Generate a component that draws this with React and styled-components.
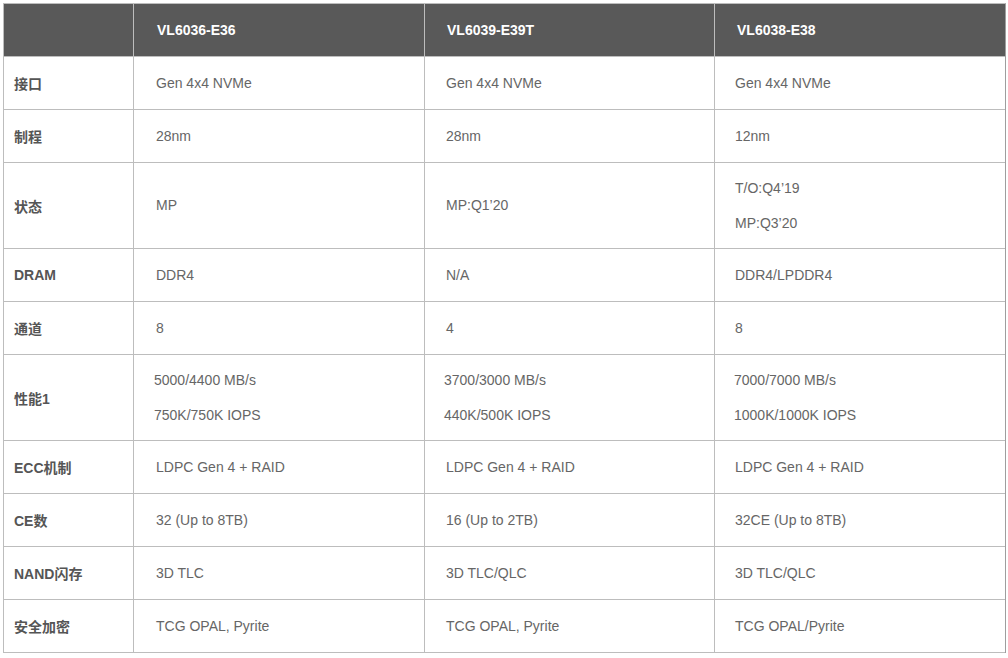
import React from "react";
import styled, { createGlobalStyle } from "styled-components";

const Global = createGlobalStyle`
  html, body { margin: 0; padding: 0; background: #fff; }
  body { font-family: "Liberation Sans", Arial, "Noto Sans CJK SC", sans-serif; }
`;

const Page = styled.div`
  padding: 3px 0 0 3px;
`;

const Grid = styled.div`
  display: grid;
  grid-template-columns: 130px 291px 290px 290px;
  border-top: 1px solid #bdbdbd;
  border-left: 1px solid #bdbdbd;
  width: max-content;
  border-right: 1px solid #9e9e9e;
`;

const HeadCell = styled.div`
  height: 52px;
  background: #595959;
  color: #fff;
  font-weight: bold;
  font-size: 14px;
  display: flex;
  align-items: center;
  padding-left: ${(p) => p.$pad}px;
  border-bottom: 1px solid #bdbdbd;
  border-right: ${(p) => (p.$last ? "none" : "1px solid #bdbdbd")};
`;

const LabelCell = styled.div`
  height: ${(p) => (p.$tall ? 85 : 52)}px;
  display: flex;
  align-items: center;
  padding-left: 10px;
  font-size: 14px;
  font-weight: bold;
  color: #555;
  border-bottom: 1px solid #bdbdbd;
  border-right: 1px solid #bdbdbd;
  font-family: "Liberation Sans", Arial, "Noto Sans CJK SC", sans-serif;
`;

const DataCell = styled.div`
  height: ${(p) => (p.$tall ? 85 : 52)}px;
  display: flex;
  flex-direction: column;
  justify-content: center;
  gap: 14px;
  padding-left: ${(p) => p.$pad}px;
  font-size: 14px;
  color: #666;
  border-bottom: 1px solid #bdbdbd;
  border-right: ${(p) => (p.$last ? "none" : "1px solid #bdbdbd")};
`;

const Line = styled.div`
  line-height: 21px;
`;

const heads = ["VL6036-E36", "VL6039-E39T", "VL6038-E38"];
const headPad = [23, 22, 22];
const dataPad = [22, 21, 20];
const tightPad = [20, 19, 19];

const rows = [
  { label: "接口", cells: [["Gen 4x4 NVMe"], ["Gen 4x4 NVMe"], ["Gen 4x4 NVMe"]] },
  { label: "制程", cells: [["28nm"], ["28nm"], ["12nm"]] },
  { label: "状态", tall: true, cells: [["MP"], ["MP:Q1’20"], ["T/O:Q4’19", "MP:Q3’20"]] },
  { label: "DRAM", cells: [["DDR4"], ["N/A"], ["DDR4/LPDDR4"]] },
  { label: "通道", cells: [["8"], ["4"], ["8"]] },
  {
    label: "性能1",
    tall: true,
    tight: true,
    cells: [
      ["5000/4400 MB/s", "750K/750K IOPS"],
      ["3700/3000 MB/s", "440K/500K IOPS"],
      ["7000/7000 MB/s", "1000K/1000K IOPS"],
    ],
  },
  { label: "ECC机制", cells: [["LDPC Gen 4 + RAID"], ["LDPC Gen 4 + RAID"], ["LDPC Gen 4 + RAID"]] },
  { label: "CE数", cells: [["32 (Up to 8TB)"], ["16 (Up to 2TB)"], ["32CE (Up to 8TB)"]] },
  { label: "NAND闪存", cells: [["3D TLC"], ["3D TLC/QLC"], ["3D TLC/QLC"]] },
  { label: "安全加密", cells: [["TCG OPAL, Pyrite"], ["TCG OPAL, Pyrite"], ["TCG OPAL/Pyrite"]] },
];

export default function App() {
  return (
    <Page>
      <Global />
      <Grid>
        <HeadCell $pad={10} />
        {heads.map((h, i) => (
          <HeadCell key={h} $pad={headPad[i]} $last={i === heads.length - 1}>
            {h}
          </HeadCell>
        ))}
        {rows.map((r) => (
          <React.Fragment key={r.label}>
            <LabelCell $tall={r.tall}>{r.label}</LabelCell>
            {r.cells.map((c, i) => (
              <DataCell
                key={i}
                $tall={r.tall}
                $pad={r.tight ? tightPad[i] : dataPad[i]}
                $last={i === 2}
              >
                {c.map((t) => (
                  <Line key={t}>{t}</Line>
                ))}
              </DataCell>
            ))}
          </React.Fragment>
        ))}
      </Grid>
    </Page>
  );
}
